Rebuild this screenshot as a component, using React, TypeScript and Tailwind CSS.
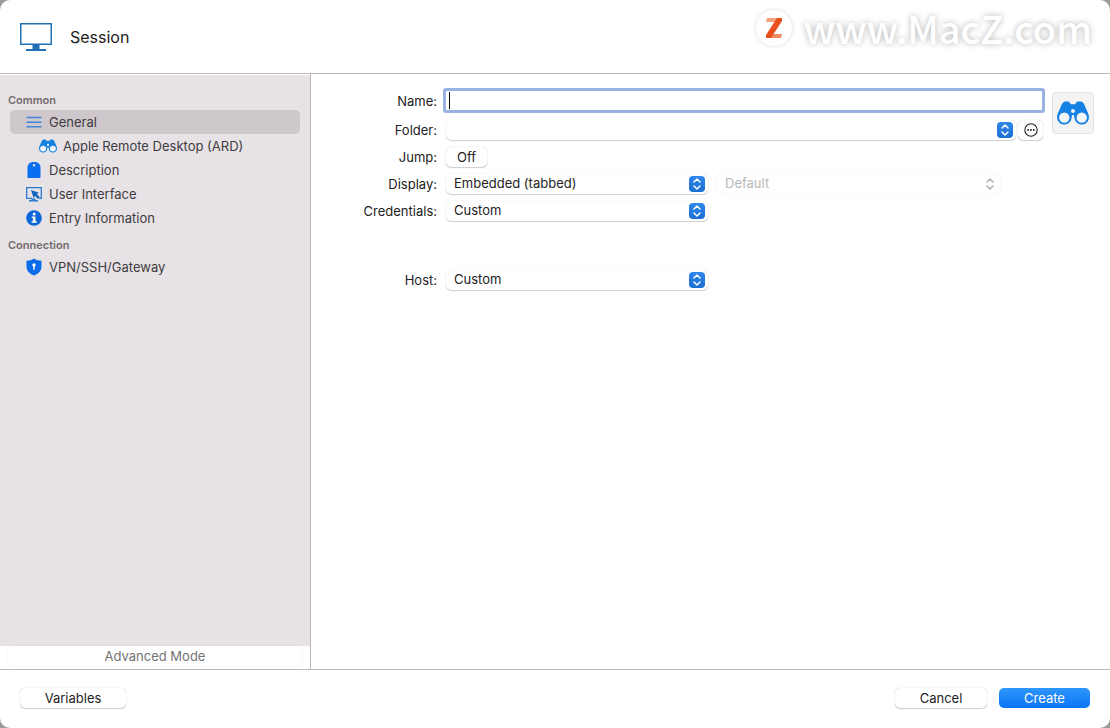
import { useState } from "react";
import type { ReactNode } from "react";
import clsx from "clsx";

function MonitorIcon() {
  return (
    <svg width="32" height="28" viewBox="0 0 32 28" fill="none" aria-hidden="true">
      <rect x="0.75" y="0.75" width="30.5" height="20.5" stroke="#2270b4" strokeWidth="1.5" />
      <path d="M12.5 21h7v5h6.5v2H6v-2h6.5z" fill="#2270b4" />
    </svg>
  );
}

function BinocularsIcon({ className }: { className?: string }) {
  return (
    <svg className={className} viewBox="0 0 32 24" aria-hidden="true">
      <path
        d="M5.200 2.600 7.500.6h4.200l1.800 1.800v.9h5v-.9L20.300.6h4.200l2.300 2 4 8.800c.8 1.600 1.200 3.200 1.200 4.800a7.300 7.300 0 0 1-14.500 1.200l-.6-3.400h-1.800l-.6 3.400A7.300 7.300 0 0 1 0 16.200c0-1.600.4-3.200 1.200-4.800z"
        fill="#1481e3"
      />
      <circle cx="7.300" cy="16.600" r="5.200" fill="#f3f7fc" />
      <circle cx="24.700" cy="16.600" r="5.200" fill="#f3f7fc" />
      <circle cx="16" cy="10" r="2" fill="#f3f7fc" />
    </svg>
  );
}

function LinesIcon() {
  return (
    <svg width="16" height="16" viewBox="0 0 16 16" stroke="#4384dc" strokeWidth="1.400" aria-hidden="true">
      <path d="M.5 3.500h15M.5 8.200h15M.5 12.800h15" />
    </svg>
  );
}

function TagIcon() {
  return (
    <svg width="16" height="16" viewBox="0 0 16 16" aria-hidden="true">
      <path
        d="M6 0h4c2.600.6 4.200 2.600 4.500 5v10a1 1 0 0 1-1 1h-11a1 1 0 0 1-1-1V5C1.800 2.600 3.400.6 6 0zM8 2a1.300 1.300 0 1 0 0 2.600A1.300 1.300 0 0 0 8 2z"
        fill="#0a6ef0"
        fillRule="evenodd"
      />
    </svg>
  );
}

function InterfaceIcon() {
  return (
    <svg width="18" height="16" viewBox="0 0 18 16" aria-hidden="true">
      <path d="M7 12.300H1.700V1.700h14.600v10.600h-2" fill="none" stroke="#2a7ad2" strokeWidth="1.300" />
      <path d="m6 4 8 2.800-2.200 1.300 3 3.200-1.800 1.700-3-3.200-1.300 2.400z" fill="#1765bd" />
      <path d="M6.500 12.500h4v1.500h2.500v1.500H4V14h2.500z" fill="#2a7ad2" />
    </svg>
  );
}

function InfoIcon() {
  return (
    <svg width="16" height="16" viewBox="0 0 16 16" aria-hidden="true">
      <circle cx="8" cy="8" r="7.800" fill="#0d67d8" />
      <circle cx="8.200" cy="4" r="1.500" fill="#fff" />
      <path d="M5.800 6.500h3.700v4.700h1.200v1.600H5.600v-1.600h1.300V8.100H5.800z" fill="#fff" />
    </svg>
  );
}

function ShieldIcon() {
  return (
    <svg width="16" height="18" viewBox="0 0 16 18" aria-hidden="true">
      <path d="M8 .5c2 1.400 4.400 2.200 7.500 2.300v5.700c0 4.200-3 7.200-7.500 9-4.500-1.800-7.500-4.800-7.500-9V2.800C3.600 2.700 6 1.900 8 .5z" fill="#0a6be8" />
      <circle cx="8" cy="7" r="1.700" fill="#fff" />
      <path d="M7.300 7.500h1.400v4.300H7.300z" fill="#fff" />
    </svg>
  );
}

function Chevrons({ disabled }: { disabled?: boolean }) {
  return (
    <span
      className={clsx(
        "pointer-events-none absolute top-1/2 right-[3px] flex size-4 -translate-y-1/2 items-center justify-center rounded",
        !disabled && "bg-linear-to-b from-[#2e86ea] to-[#1b6fd2]",
      )}
    >
      <svg
        width="8"
        height="12"
        viewBox="0 0 8 12"
        fill="none"
        stroke={disabled ? "#b0b0b0" : "#fff"}
        strokeWidth="1.500"
        strokeLinecap="round"
        strokeLinejoin="round"
        aria-hidden="true"
      >
        <path d="m1 4 3-3 3 3M1 8l3 3 3-3" />
      </svg>
    </span>
  );
}

interface SelectProps {
  id: string;
  options: string[];
  className?: string;
  disabled?: boolean;
  label?: string;
}

function Select({ id, options, className, disabled, label }: SelectProps) {
  return (
    <div className={clsx("relative", className)}>
      <select
        id={id}
        disabled={disabled}
        aria-label={label}
        className={clsx(
          "block h-5 w-full appearance-none rounded-[5px] bg-white pr-6 pb-px pl-2 text-[13px] leading-4",
          disabled
            ? "text-[#b8b8b8] shadow-[0_0_1px_rgba(0,0,0,0.2)]"
            : "text-[#222] shadow-[0_0_1px_rgba(0,0,0,0.2),0_1px_1px_rgba(0,0,0,0.18)]",
        )}
      >
        {options.map((option) => (
          <option key={option}>{option}</option>
        ))}
      </select>
      <Chevrons disabled={disabled} />
    </div>
  );
}

interface FormRowProps {
  label: string;
  htmlFor: string;
  children: ReactNode;
  className?: string;
}

function FormRow({ label, htmlFor, children, className }: FormRowProps) {
  return (
    <div className={clsx("flex items-center", className ?? "h-[27px]")}>
      <label htmlFor={htmlFor} className="mr-[9px] w-[126px] shrink-0 text-right">
        {label}
      </label>
      {children}
    </div>
  );
}

interface NavItemProps {
  icon: ReactNode;
  label: string;
  active?: boolean;
  nested?: boolean;
  onClick: () => void;
}

function NavItem({ icon, label, active, nested, onClick }: NavItemProps) {
  return (
    <li>
      <button
        type="button"
        onClick={onClick}
        className={clsx(
          "flex h-6 w-full items-center gap-[5px] rounded-[5px] text-left",
          nested ? "pl-7" : "pl-[14px]",
          active && "bg-[#cec8cc]",
        )}
      >
        <span className="flex w-5 shrink-0 justify-center">{icon}</span>
        {label}
      </button>
    </li>
  );
}

function PushButton({ children, className, primary }: { children: ReactNode; className?: string; primary?: boolean }) {
  return (
    <button
      type="button"
      className={clsx(
        "flex h-5 items-center justify-center rounded-[5px]",
        primary
          ? "bg-linear-to-b from-[#2f96fb] to-[#0574f5] text-white"
          : "bg-white shadow-[0_0_1px_rgba(0,0,0,0.3),0_1px_1px_rgba(0,0,0,0.18)]",
        className,
      )}
    >
      {children}
    </button>
  );
}

function Watermark() {
  return (
    <div className="ml-auto flex items-center gap-3 self-start pt-2">
      <span className="flex size-9 items-center justify-center rounded-full bg-white shadow-[0_0_4px_rgba(0,0,0,0.15)]">
        <svg width="18" height="20" viewBox="0 0 18 20" aria-hidden="true">
          <path d="M2 0h14l-3 4H1z" fill="#f3a07c" />
          <path d="M5 16h12l-1 4H1z" fill="#f08a60" />
          <path d="M12 0h5v3L6 20H1v-3z" fill="#e8511d" />
        </svg>
      </span>
      <span className="font-['Noto_Sans_CJK_SC',sans-serif] text-[38px] leading-10 font-medium text-white [text-shadow:0_0_6px_rgba(0,0,0,0.3)]">
        www.MacZ.com
      </span>
    </div>
  );
}

const COMMON = [
  { label: "General", icon: <LinesIcon /> },
  { label: "Apple Remote Desktop (ARD)", icon: <BinocularsIcon className="h-[14px] w-[18px]" />, nested: true },
  { label: "Description", icon: <TagIcon /> },
  { label: "User Interface", icon: <InterfaceIcon /> },
  { label: "Entry Information", icon: <InfoIcon /> },
];

const CONNECTION = [{ label: "VPN/SSH/Gateway", icon: <ShieldIcon /> }];

function Sidebar() {
  const [selected, setSelected] = useState("General");

  return (
    <aside className="flex w-[311px] shrink-0 flex-col border-r border-[#b9b5b8] text-[#403c3f]">
      <nav className="mt-px flex-1 bg-[#e7e2e5] px-[10px] pt-[18px]">
        <h2 className="-ml-[2px] h-[17px] text-[11px] leading-[15px] font-semibold text-[#716c70]">Common</h2>
        <ul>
          {COMMON.map((item) => (
            <NavItem
              key={item.label}
              {...item}
              active={selected === item.label}
              onClick={() => setSelected(item.label)}
            />
          ))}
        </ul>
        <h2 className="mt-2 -ml-[2px] h-[17px] text-[11px] leading-[15px] font-semibold text-[#716c70]">Connection</h2>
        <ul>
          {CONNECTION.map((item) => (
            <NavItem
              key={item.label}
              {...item}
              active={selected === item.label}
              onClick={() => setSelected(item.label)}
            />
          ))}
        </ul>
      </nav>
      <div className="h-[23px] px-2">
        <button
          type="button"
          className="flex h-5 w-full items-center justify-center rounded-[5px] text-[#747474] shadow-[0_0_1px_rgba(0,0,0,0.2)]"
        >
          Advanced Mode
        </button>
      </div>
    </aside>
  );
}

function SessionForm() {
  const [name, setName] = useState("");
  const [jump, setJump] = useState(false);

  return (
    <main className="flex min-w-0 flex-1 items-start pt-[11px] pr-4">
      <form className="min-w-0 flex-1">
        <FormRow label="Name:" htmlFor="name" className="h-[31px]">
          <div className="relative -ml-[3px] min-w-0 flex-1">
            <input
              id="name"
              type="text"
              value={name}
              onChange={(e) => setName(e.target.value)}
              className="peer block h-[25px] w-full rounded-[3px] border-3 border-[#98b3e2] bg-white px-[3px] outline-none"
            />
            {/* resting caret, replaced by the native one on focus */}
            {!name && (
              <span className="pointer-events-none absolute top-1 left-[6px] h-[17px] w-px bg-black peer-focus:hidden" />
            )}
          </div>
        </FormRow>
        <FormRow label="Folder:" htmlFor="folder">
          <Select id="folder" options={[""]} className="min-w-0 flex-1" />
          <button
            type="button"
            aria-label="Browse folders"
            className="mr-[2px] ml-[2px] flex h-5 w-[25px] items-center justify-center rounded-[5px] shadow-[0_0_1px_rgba(0,0,0,0.3),0_1px_1px_rgba(0,0,0,0.18)]"
          >
            <svg width="14" height="14" viewBox="0 0 14 14" fill="#222" aria-hidden="true">
              <circle cx="7" cy="7" r="6.200" fill="none" stroke="#222" strokeWidth="1.100" />
              <circle cx="4.200" cy="7" r="0.900" />
              <circle cx="7" cy="7" r="0.900" />
              <circle cx="9.800" cy="7" r="0.900" />
            </svg>
          </button>
        </FormRow>
        <FormRow label="Jump:" htmlFor="jump">
          <button
            id="jump"
            type="button"
            onClick={() => setJump(!jump)}
            className="flex h-5 w-[41px] items-center justify-center rounded-[5px] shadow-[0_0_1px_rgba(0,0,0,0.3),0_1px_1px_rgba(0,0,0,0.18)]"
          >
            {jump ? "On" : "Off"}
          </button>
        </FormRow>
        <FormRow label="Display:" htmlFor="display">
          <Select id="display" options={["Embedded (tabbed)", "External", "Undocked"]} className="w-[262px]" />
          <Select id="monitor" label="Monitor" options={["Default"]} className="ml-[9px] w-[284px]" disabled />
        </FormRow>
        <FormRow label="Credentials:" htmlFor="credentials">
          <Select id="credentials" options={["Custom", "Inherited", "None"]} className="w-[262px]" />
        </FormRow>
        <div className="mt-[42px]">
          <FormRow label="Host:" htmlFor="host">
            <Select id="host" options={["Custom", "Inherited"]} className="w-[262px]" />
          </FormRow>
        </div>
      </form>
      <button
        type="button"
        aria-label="Change icon"
        className="mt-[7px] ml-[7px] flex size-[42px] shrink-0 items-center justify-center rounded-[4px] border border-[#e2e2e2] bg-[#f3f3f3]"
      >
        <BinocularsIcon className="h-6 w-8" />
      </button>
    </main>
  );
}

export default function App() {
  return (
    <div className="min-h-screen bg-[#9b9b9b] font-[Inter,sans-serif] text-[13px] leading-4 text-[#222]">
      <div className="flex min-h-screen flex-col overflow-hidden rounded-[10px] bg-white">
        <header className="flex h-[74px] shrink-0 items-center border-b border-[#b9b9b9] pr-[18px] pl-5">
          <MonitorIcon />
          <h1 className="ml-[18px] text-base">Session</h1>
          <Watermark />
        </header>
        <div className="flex flex-1">
          <Sidebar />
          <SessionForm />
        </div>
        <footer className="flex h-[59px] shrink-0 items-center border-t border-[#b9b9b9] px-5 pb-[2px]">
          <PushButton className="w-[106px]">Variables</PushButton>
          <PushButton className="ml-auto w-[92px]">Cancel</PushButton>
          <PushButton primary className="ml-3 w-[91px]">
            Create
          </PushButton>
        </footer>
      </div>
    </div>
  );
}
